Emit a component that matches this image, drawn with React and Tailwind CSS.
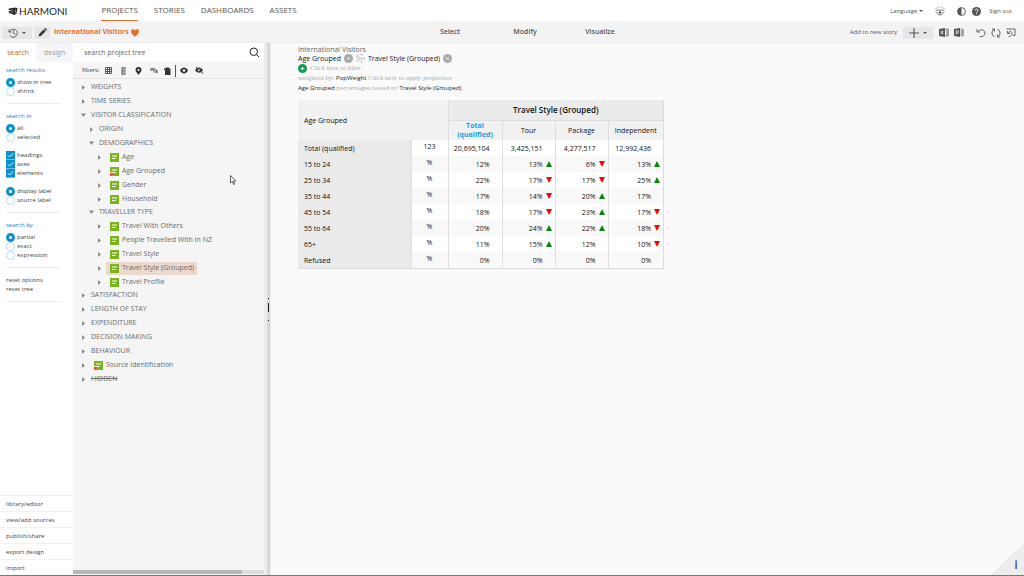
import React, { useState } from 'react';
import clsx from 'clsx';

const NAV_ITEMS = ['PROJECTS', 'STORIES', 'DASHBOARDS', 'ASSETS'];
const MODES = ['Select', 'Modify', 'Visualize'];
const FOOTER_LINKS = ['library/editor', 'view/add sources', 'publish/share', 'export design', 'import'];

const TREE = [
  { label: 'WEIGHTS' },
  { label: 'TIME SERIES' },
  {
    label: 'VISITOR CLASSIFICATION',
    children: [
      { label: 'ORIGIN' },
      {
        label: 'DEMOGRAPHICS',
        children: [
          { label: 'Age', type: 'axis' },
          { label: 'Age Grouped', type: 'axis', derived: true },
          { label: 'Gender', type: 'axis' },
          { label: 'Household', type: 'axis' },
        ],
      },
      {
        label: 'TRAVELLER TYPE',
        children: [
          { label: 'Travel With Others', type: 'axis' },
          { label: 'People Travelled With In NZ', type: 'axis' },
          { label: 'Travel Style', type: 'axis' },
          { label: 'Travel Style (Grouped)', type: 'axis' },
          { label: 'Travel Profile', type: 'axis' },
        ],
      },
    ],
  },
  { label: 'SATISFACTION' },
  { label: 'LENGTH OF STAY' },
  { label: 'EXPENDITURE' },
  { label: 'DECISION MAKING' },
  { label: 'BEHAVIOUR' },
  { label: 'Source Identification', type: 'axis', derived: true },
  { label: 'HIDDEN', hidden: true },
];

const COLUMNS = ['Tour', 'Package', 'Independent'];

const ROWS = [
  { label: 'Total (qualified)', unit: '123', cells: [['20,695,104'], ['3,425,151'], ['4,277,517'], ['12,992,436']] },
  { label: '15 to 24', unit: '%', cells: [['12%'], ['13%', 'up'], ['6%', 'down'], ['13%', 'up']] },
  { label: '25 to 34', unit: '%', cells: [['22%'], ['17%', 'down'], ['17%', 'down'], ['25%', 'up']] },
  { label: '35 to 44', unit: '%', cells: [['17%'], ['14%', 'down'], ['20%', 'up'], ['17%']] },
  { label: '45 to 54', unit: '%', cells: [['18%'], ['17%', 'down'], ['23%', 'up'], ['17%', 'down']] },
  { label: '55 to 64', unit: '%', cells: [['20%'], ['24%', 'up'], ['22%', 'up'], ['18%', 'down']] },
  { label: '65+', unit: '%', cells: [['11%'], ['15%', 'up'], ['12%'], ['10%', 'down']] },
  { label: 'Refused', unit: '%', cells: [['0%'], ['0%'], ['0%'], ['0%']] },
];

const Logo = () => (
  <a href="#" aria-label="Harmoni" className="flex items-center gap-px text-[#222]">
    <svg viewBox="0 0 20 16" className="w-[10px] h-2" fill="currentColor">
      <circle cx="11" cy="7" r="5.5" />
      <path d="M0 4l6-2 4 4-5 1zM1 9l6-2 2 5-6 1zM13 1l6 1-2 12-4-1z" />
      <path d="M5 13l6-2 5 3-3 2z" />
      <path d="M4 8l6-3M7 12l4-4M14 4l2 8" stroke="#fff" strokeWidth="1" fill="none" />
    </svg>
    <span className="font-[Lato,sans-serif] text-[10px] leading-none">HARMONI</span>
  </a>
);

const HistoryIcon = () => (
  <svg viewBox="0 0 20 20" className="size-[10px]" fill="none" stroke="currentColor" strokeWidth="1.8">
    <path d="M2 3v5h5M3 8a8 8 0 1 1 1 7M11 5v5l4 3" />
  </svg>
);

const PencilIcon = () => (
  <svg viewBox="0 0 16 16" className="size-[9px]" fill="currentColor">
    <path d="M1 15l1.200-4.500L10 2.700l3.300 3.300-7.800 7.800zM11 1.700l1.200-1.200a1 1 0 0 1 1.400 0l1.900 1.900a1 1 0 0 1 0 1.400l-1.200 1.200z" />
  </svg>
);

const HeartIcon = () => (
  <svg viewBox="0 0 16 16" className="size-2" fill="currentColor">
    <path d="M8 15.500C4 12 0 9 0 5a4.200 4.200 0 0 1 8-2 4.200 4.200 0 0 1 8 2c0 4-4 7-8 10.500z" />
  </svg>
);

const CaretIcon = () => (
  <svg viewBox="0 0 8 4" className="w-1 h-0.5" fill="currentColor">
    <path d="M0 0h8L4 4z" />
  </svg>
);

const WatchIcon = () => (
  <svg viewBox="0 0 20 20" className="size-[10px]" fill="none" stroke="currentColor" strokeWidth="1.5">
    <path d="M10 1v3M5 2l1 3M15 2l-1 3M1 5l3 2M19 5l-3 2" strokeWidth="1" />
    <path d="M1 11c4-4 14-4 18 0" />
    <path d="M4 12c-1 8 13 8 12 0" />
    <circle cx="10" cy="13" r="2" fill="currentColor" />
  </svg>
);

const ContrastIcon = () => (
  <svg viewBox="0 0 16 16" className="size-[9px]">
    <circle cx="8" cy="8" r="7" fill="none" stroke="currentColor" strokeWidth="1.600" />
    <path d="M8 1a7 7 0 0 0 0 14z" fill="currentColor" />
  </svg>
);

const HelpIcon = () => (
  <svg viewBox="0 0 16 16" className="size-[9px]">
    <circle cx="8" cy="8" r="8" fill="currentColor" />
    <path d="M5.500 6.200a2.500 2.500 0 1 1 3.600 2.200c-.8.4-1.100.8-1.100 1.600M8 11.500v1.600" fill="none" stroke="#fff" strokeWidth="1.600" />
  </svg>
);

const ExcelIcon = () => (
  <svg viewBox="0 0 20 18" className="w-[10px] h-[9px]">
    <path d="M0 2l12-2v18L0 16z" fill="currentColor" />
    <path d="M3.500 5.500l5 7M8.500 5.500l-5 7" stroke="#fff" strokeWidth="1.600" />
    <path d="M13 2.500h5.500v13H13M16 3v12" fill="none" stroke="currentColor" strokeWidth="1.500" />
  </svg>
);

const PowerPointIcon = () => (
  <svg viewBox="0 0 20 18" className="w-[10px] h-[9px]">
    <path d="M0 2l12-2v18L0 16z" fill="currentColor" />
    <path d="M4.500 13V5.500h2.500a2 2 0 0 1 0 4.500H4.500" fill="none" stroke="#fff" strokeWidth="1.500" />
    <path d="M13 2.500h5.500v13H13M13 6h4v4h-4M13 12.500h4" fill="none" stroke="currentColor" strokeWidth="1.300" />
  </svg>
);

const UndoIcon = () => (
  <svg viewBox="0 0 20 20" className="size-[10px]" fill="none" stroke="currentColor" strokeWidth="1.800">
    <path d="M2 2v6h6M3 8c3-6 15-6 15 2 0 6-6 8-11 7" />
  </svg>
);

const RefreshIcon = () => (
  <svg viewBox="0 0 20 20" className="size-[10px]" fill="none" stroke="currentColor" strokeWidth="1.800">
    <path d="M7 17.500A8 8 0 0 1 7 2.500M13 2.500a8 8 0 0 1 0 15M2 2h5v5M18 18h-5v-5" />
  </svg>
);

const RevertIcon = () => (
  <svg viewBox="0 0 20 20" className="size-[10px]" fill="none" stroke="currentColor" strokeWidth="1.800">
    <path d="M1 2h17v13h-4M3 6v5h5M4 10c3-5 9-3 8 2-1 4-4 5-7 5" />
  </svg>
);

const AxisIcon = ({ derived }) => (
  <svg viewBox="0 0 18 18" className="size-[9px] shrink-0">
    <rect width="18" height="18" fill="#7ab51d" />
    <path d="M4 6h10M4 11h7" stroke="#fff" strokeWidth="2" />
    {derived && <path d="M0 10h6v8H0z" fill="#f5e9c8" />}
    {derived && <path d="M0 12h4v-1l4 4-4 3H0z" fill="#ef5a1c" />}
  </svg>
);

const TreeArrow = ({ open }) => (
  <svg viewBox="0 0 10 10" className="size-[5px] shrink-0" fill="#8a8a8a">
    {open ? <path d="M0 1h10L5 8z" /> : <path d="M2 0v10l6-5z" />}
  </svg>
);

const TreeNode = ({ node, selected, onSelect }) => {
  const [open, setOpen] = useState(Boolean(node.children));
  const isAxis = node.type === 'axis';
  const nestedLeaves = node.children?.every(child => child.type === 'axis');

  return (
    <li>
      <div className="flex items-center h-3.5">
        <button aria-label={`Toggle ${node.label}`} onClick={() => setOpen(!open)} className="flex items-center">
          <TreeArrow open={open} />
        </button>
        <button
          onClick={() => onSelect(node.label)}
          className={clsx(
            'flex items-center gap-[3px] h-[13px] whitespace-nowrap',
            isAxis ? 'ml-1 pl-1 pr-[3px]' : 'pl-[5px]',
            node.hidden && 'line-through',
            selected === node.label && 'bg-[#ecd8cd]'
          )}
        >
          {isAxis && <AxisIcon derived={node.derived} />}
          {node.label}
        </button>
      </div>
      {open && node.children && (
        <ul className={clsx('pl-2', nestedLeaves && '-mb-px')}>
          {node.children.map(child => (
            <TreeNode key={child.label} node={child} selected={selected} onSelect={onSelect} />
          ))}
        </ul>
      )}
    </li>
  );
};

const Radio = ({ name, label, defaultChecked }) => (
  <label className="flex items-center gap-0.5 h-[9px]">
    <input
      type="radio"
      name={name}
      defaultChecked={defaultChecked}
      className="appearance-none size-[9px] rounded-full bg-white border border-[#b5dff2] checked:border-[3px] checked:border-[#0a8fd0]"
    />
    {label}
  </label>
);

const Checkbox = ({ label }) => (
  <label className="flex items-center gap-0.5 h-[9px]">
    <span className="grid *:col-start-1 *:row-start-1">
      <input type="checkbox" defaultChecked className="peer appearance-none size-[9px] border-b border-[#6fbde4] checked:bg-[#0a8fd0]" />
      <svg viewBox="0 0 9 9" className="hidden peer-checked:block size-[9px] pointer-events-none" fill="none" stroke="#fff">
        <path d="M2 4.500l1.500 1.500L7 2.500" />
      </svg>
    </span>
    {label}
  </label>
);

const SearchOptions = () => (
  <aside className="w-[73px] shrink-0 flex flex-col justify-between bg-white text-[6px] leading-[9px] text-[#444]">
    <div>
      <div className="flex h-[19px] text-[7px]">
        <button className="w-9 text-[#e8590c]">search</button>
        <button className="flex-1 bg-[#f6f6f8] text-[#999]">design</button>
      </div>
      <div className="pl-1.5 pr-3 pt-1">
        <fieldset className="border-b border-[#eee] pb-[7px]">
          <legend className="text-[#0a84c6] pb-[3px]">search results</legend>
          <Radio name="results" label="show in tree" defaultChecked />
          <Radio name="results" label="shrink" />
        </fieldset>
        <fieldset className="pt-2">
          <legend className="text-[#0a84c6] contents">search in</legend>
          <div className="pt-[3px]">
            <Radio name="scope" label="all" defaultChecked />
            <Radio name="scope" label="selected" />
          </div>
        </fieldset>
        <div className="pt-[9px]">
          <Checkbox label="headings" />
          <Checkbox label="axes" />
          <Checkbox label="elements" />
        </div>
        <div className="pt-[9px] pb-[7px] border-b border-[#eee]">
          <Radio name="labels" label="display label" defaultChecked />
          <Radio name="labels" label="source label" />
        </div>
        <fieldset className="pt-2 pb-[7px] border-b border-[#eee]">
          <legend className="text-[#0a84c6] contents">search by</legend>
          <div className="pt-[3px]">
            <Radio name="match" label="partial" defaultChecked />
            <Radio name="match" label="exact" />
            <Radio name="match" label="expression" />
          </div>
        </fieldset>
        <div className="flex flex-col items-start pt-2 pb-[7px] border-b border-[#eee]">
          <button>reset options</button>
          <button>reset tree</button>
        </div>
      </div>
    </div>
    <nav>
      {FOOTER_LINKS.map(link => (
        <a key={link} href="#" className="flex items-center h-4 pt-0.5 pl-1.5 border-t border-[#f1f1f3]">
          {link}
        </a>
      ))}
    </nav>
  </aside>
);

const FilterBar = () => (
  <div className="flex items-center h-[17px] pt-px pl-[9px] border-b border-[#e4e4e6] text-[6px] text-[#333]">
    <span className="w-[23px]">filters:</span>
    <button aria-label="Grid filter" className="w-[15px]">
      <svg viewBox="0 0 14 14" className="size-[7px]" fill="none" stroke="currentColor" strokeWidth="1.500">
        <path d="M1 1h12v12H1zM5 1v12M9 1v12M1 5h12M1 9h12" />
      </svg>
    </button>
    <button aria-label="Numeric filter" className="w-[15px]">
      <svg viewBox="0 0 14 16" className="w-[7px] h-2">
        <rect x="3" width="8" height="16" fill="#777" />
        <path d="M6 2h3M6 5h3M6 8h3M6 11h3M6 14h3" stroke="#fff" strokeWidth="1.200" />
      </svg>
    </button>
    <button aria-label="Location filter" className="w-[15px]">
      <svg viewBox="0 0 14 16" className="w-[7px] h-2">
        <path d="M7 0a6 6 0 0 1 6 6c0 4-4 6-6 10C5 12 1 10 1 6a6 6 0 0 1 6-6z" fill="currentColor" />
        <circle cx="7" cy="6" r="2" fill="#fff" />
      </svg>
    </button>
    <button aria-label="Weight filter" className="w-3.5">
      <svg viewBox="0 0 16 14" className="w-2 h-[7px]" fill="none" stroke="currentColor" strokeWidth="1.500">
        <path d="M0 6h6L4 2 1 6M8 1v10M9 5l6 2M10 10h6M13 7v5" />
      </svg>
    </button>
    <button aria-label="Date filter" className="w-[11px]">
      <svg viewBox="0 0 14 16" className="w-[7px] h-2" fill="currentColor">
        <path d="M0 3h3V1h7v2h3v13H2V6H0z" />
      </svg>
    </button>
    <span className="h-3 border-l border-[#555] mr-1" />
    <button aria-label="Show visible" className="w-[15px]">
      <svg viewBox="0 0 16 14" className="w-2 h-[7px]">
        <path d="M0 7c4-8 12-8 16 0-4 8-12 8-16 0z" fill="currentColor" />
        <circle cx="8" cy="7" r="2.500" fill="#fff" />
      </svg>
    </button>
    <button aria-label="Show hidden">
      <svg viewBox="0 0 18 14" className="w-[9px] h-[7px]">
        <path d="M0 6c4-7 12-7 16 0-4 7-12 7-16 0z" fill="currentColor" />
        <circle cx="8" cy="6" r="2.500" fill="#fff" />
        <path d="M2 0l15 14" stroke="currentColor" strokeWidth="2" />
      </svg>
    </button>
  </div>
);

const TreePanel = () => {
  const [selected, setSelected] = useState('Travel Style (Grouped)');

  return (
    <section className="w-[191px] shrink-0 flex flex-col bg-[#f5f5f6]">
      <div className="flex items-center h-[19px] bg-white pl-[11px] pr-1">
        <input
          aria-label="search project tree"
          placeholder="search project tree"
          className="flex-1 min-w-0 pt-0.5 text-[7px] placeholder:text-[#666] outline-none"
        />
        <button aria-label="Search" className="text-[#222]">
          <svg viewBox="0 0 22 22" className="size-[11px]" fill="none" stroke="currentColor" strokeWidth="2">
            <circle cx="9.500" cy="9.500" r="7.500" />
            <path d="M15 15l5 5" />
          </svg>
        </button>
      </div>
      <FilterBar />
      <ul className="flex-1 min-h-0 overflow-hidden pt-px pl-2 text-[7px] text-[#6b6b6b]">
        {TREE.map(node => (
          <TreeNode key={node.label} node={node} selected={selected} onSelect={setSelected} />
        ))}
      </ul>
      <div className="h-1 mb-px bg-[#dcdcde]">
        <div className="h-full w-[169px] bg-[#b9b9bb]" />
      </div>
    </section>
  );
};

const RemoveButton = ({ label }) => (
  <button aria-label={`Remove ${label}`} className="text-[#a9a9a9]">
    <svg viewBox="0 0 18 18" className="size-[9px]">
      <circle cx="9" cy="9" r="9" fill="currentColor" />
      <path d="M6 6l6 6M12 6l-6 6" stroke="#fff" strokeWidth="1.500" />
    </svg>
  </button>
);

const TableSummary = () => (
  <div className="text-[7px] leading-[9px] text-[#222]">
    <p className="text-[#666] leading-2">International Visitors</p>
    <div className="flex items-center gap-[3px] h-[9px]">
      <span>Age Grouped</span>
      <RemoveButton label="Age Grouped" />
      <span className="grid place-items-center size-[9px] rounded-full border border-dashed border-[#bbb] text-[5px] leading-none text-[#aaa]">by</span>
      <span>Travel Style (Grouped)</span>
      <RemoveButton label="Travel Style (Grouped)" />
    </div>
    <div className="flex items-center gap-[3px] h-[10px]">
      <button aria-label="Add filter">
        <svg viewBox="0 0 18 18" className="size-[9px]">
          <circle cx="9" cy="9" r="9" fill="#0f9d4f" />
          <path d="M9 5.500v7M5.500 9h7" stroke="#fff" strokeWidth="2" />
        </svg>
      </button>
      <button className="font-['Liberation_Serif',serif] italic text-[#aaa]">Click here to filter</button>
    </div>
    <p className="font-['Liberation_Serif',serif] text-[#aaa] leading-[10px]">
      weighted by: <span className="font-['Open_Sans',sans-serif] text-[6px] text-[#222]">PopWeight</span>{' '}
      <button className="italic">Click here to apply projection</button>
    </p>
    <p className="text-[6px] leading-[10px] text-[#aaa]">
      <span className="text-[#222]">Age Grouped</span> percentages based on <span className="text-[#222]">Travel Style (Grouped)</span>
    </p>
  </div>
);

const Marker = ({ trend }) => (
  <svg viewBox="0 0 10 10" className="size-1.5">
    {trend === 'up' && <path d="M5 0l5 10H0z" fill="#0a850a" />}
    {trend === 'down' && <path d="M0 0h10L5 10z" fill="#f00" />}
  </svg>
);

const CrossTable = () => (
  <div className="w-fit mt-[7px] border-r border-b border-[#dcdcde]">
    <table className="table-fixed w-[365px] text-[7px] leading-[9px] text-[#111]">
      <colgroup>
        <col className="w-[113px]" />
        <col className="w-[37px]" />
        <col className="w-[54px]" />
        <col className="w-[53px]" />
        <col className="w-[53px]" />
        <col />
      </colgroup>
      <thead className="bg-[#f1f1f1]">
        <tr className="h-5">
          <th colSpan={2} rowSpan={2} className="pl-1.5 text-left font-normal">
            Age Grouped
          </th>
          <th colSpan={4} className="border-l border-b border-[#dfdfe1] bg-[#ebebec] text-[8px] font-semibold">
            Travel Style (Grouped)
          </th>
        </tr>
        <tr className="h-5">
          <th className="border-l border-[#dfdfe1] font-bold text-[#17a0e6]">
            Total
            <br />
            (qualified)
          </th>
          {COLUMNS.map(column => (
            <th key={column} className="border-l border-[#dfdfe1] font-normal">
              {column}
            </th>
          ))}
        </tr>
      </thead>
      <tbody>
        {ROWS.map(row => (
          <tr key={row.label} className="h-4 odd:bg-white even:bg-[#f9f9fa]">
            <th className="pl-1.5 text-left font-normal bg-[#eaeaeb]">{row.label}</th>
            <td className="border-l border-[#dfdfe1] pt-0.5 align-top text-center">{row.unit}</td>
            {row.cells.map(([value, trend], i) => (
              <td key={i} className="border-l border-[#dfdfe1] pr-[3px]">
                <span className="flex items-center justify-end gap-[3px]">
                  {value}
                  <Marker trend={trend} />
                </span>
              </td>
            ))}
          </tr>
        ))}
      </tbody>
    </table>
  </div>
);

const App = () => {
  const [activeNav, setActiveNav] = useState('PROJECTS');

  return (
    <div className="flex flex-col h-screen overflow-hidden border-b border-[#777] bg-[#fafafb] font-['Open_Sans',sans-serif] text-[#555]">
      <header className="flex items-center h-[21px] shrink-0 bg-white pl-2 pr-3 text-[6px]">
        <Logo />
        <nav className="flex h-full gap-4 ml-[34px] text-[8px]">
          {NAV_ITEMS.map(item => (
            <a
              key={item}
              href="#"
              onClick={() => setActiveNav(item)}
              className={clsx('flex items-center border-b', activeNav === item ? 'border-[#e8702a]' : 'border-transparent')}
            >
              {item}
            </a>
          ))}
        </nav>
        <div className="flex items-center ml-auto pt-px">
          <button className="flex items-center gap-0.5 mr-3">
            Language <CaretIcon />
          </button>
          <button aria-label="Watch" className="mr-3">
            <WatchIcon />
          </button>
          <button aria-label="Contrast" className="mr-1.5">
            <ContrastIcon />
          </button>
          <button aria-label="Help" className="mr-2">
            <HelpIcon />
          </button>
          <a href="#">Sign out</a>
        </div>
      </header>

      <div className="grid grid-cols-[1fr_auto_1fr] items-center h-[22px] shrink-0 bg-[#f3f3f4] border-b border-[#ededef] pt-0.5 pl-0.5 pr-2">
        <div className="flex items-center">
          <button aria-label="History" className="flex items-center gap-1 h-3 px-1.5 bg-[#e6e6e8]">
            <HistoryIcon />
            <CaretIcon />
          </button>
          <button aria-label="Edit" className="grid place-items-center w-4 h-3 ml-0.5 bg-[#e6e6e8] text-[#333]">
            <PencilIcon />
          </button>
          <h1 className="flex items-center gap-0.5 ml-1 text-[7px] font-bold text-[#e8702a]">
            International Visitors <HeartIcon />
          </h1>
        </div>
        <div className="grid grid-cols-3 w-[257px] pl-8 text-center text-[7px] font-semibold">
          {MODES.map(mode => (
            <button key={mode}>{mode}</button>
          ))}
        </div>
        <div className="flex items-center justify-end text-[6px]">
          <span className="mr-1.5">Add to new story</span>
          <button aria-label="Add" className="flex items-center gap-1 h-3 px-1.5 mr-1.5 bg-[#e6e6e8]">
            <svg viewBox="0 0 16 16" className="size-[10px]" stroke="currentColor" strokeWidth="1.800">
              <path d="M8 0v16M0 8h16" />
            </svg>
            <CaretIcon />
          </button>
          <div className="flex gap-[5px] mr-3">
            <button aria-label="Export to Excel">
              <ExcelIcon />
            </button>
            <button aria-label="Export to PowerPoint">
              <PowerPointIcon />
            </button>
          </div>
          <div className="flex gap-[5px]">
            <button aria-label="Undo">
              <UndoIcon />
            </button>
            <button aria-label="Refresh">
              <RefreshIcon />
            </button>
            <button aria-label="Revert">
              <RevertIcon />
            </button>
          </div>
        </div>
      </div>

      <div className="flex flex-1 min-h-0">
        <SearchOptions />
        <TreePanel />
        <div className="flex flex-col items-center justify-center w-[7px] shrink-0 border-l-[3px] border-r border-l-[#ececee] border-r-[#ececee] bg-[#d8d8db]">
          <svg viewBox="0 0 3 23" className="w-[3px] h-[23px] shrink-0" fill="#222">
            <path d="M1 0h1v1H1zM1 5h1v9H1zM1 22h1v1H1z" />
          </svg>
        </div>
        <main className="relative flex-1 min-w-0 pl-[27px] pt-[3px]">
          <TableSummary />
          <CrossTable />
          <button
            aria-label="Information"
            className="absolute right-0 bottom-0 size-8 bg-linear-to-br from-transparent from-50% to-[#ededee] to-50% pl-4 pt-3 text-[12px] leading-none text-black"
          >
            i
          </button>
        </main>
      </div>

      {/* pointer */}
      <svg viewBox="0 0 12 20" className="absolute left-[230px] top-[175px] w-[6px] h-[10px]">
        <path d="M1 1v15l3.500-3.500L7 19l2.500-1L7 12h4.500z" fill="#fff" stroke="#222" strokeWidth="1.400" />
      </svg>
    </div>
  );
};

export default App;
